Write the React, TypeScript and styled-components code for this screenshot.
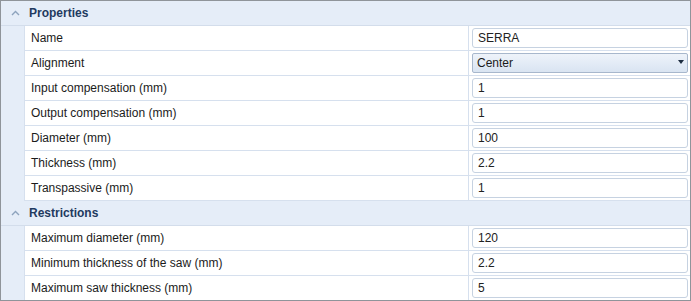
import React from 'react';
import styled, { createGlobalStyle } from 'styled-components';

interface Property {
  label: string;
  value: string;
  kind?: 'text' | 'select';
}

interface Category {
  title: string;
  items: Property[];
}

const categories: Category[] = [
  {
    title: 'Properties',
    items: [
      { label: 'Name', value: 'SERRA' },
      { label: 'Alignment', value: 'Center', kind: 'select' },
      { label: 'Input compensation (mm)', value: '1' },
      { label: 'Output compensation (mm)', value: '1' },
      { label: 'Diameter (mm)', value: '100' },
      { label: 'Thickness (mm)', value: '2.2' },
      { label: 'Transpassive (mm)', value: '1' },
    ],
  },
  {
    title: 'Restrictions',
    items: [
      { label: 'Maximum diameter (mm)', value: '120' },
      { label: 'Minimum thickness of the saw (mm)', value: '2.2' },
      { label: 'Maximum saw thickness (mm)', value: '5' },
    ],
  },
];

const GlobalStyle = createGlobalStyle`
  body {
    margin: 0;
    background: #ffffff;
    font-family: 'Liberation Sans', Arial, sans-serif;
  }
`;

const App: React.FC = () => {
  return (
    <>
      <GlobalStyle />
      <Grid>
        {categories.map((cat) => (
          <Section key={cat.title}>
            <CategoryHeader>
              <Toggle>
                <svg width="9" height="6" viewBox="0 0 9 6">
                  <path d="M1 5 L4.5 1.5 L8 5" fill="none" stroke="#8da3bd" strokeWidth="1.4" />
                </svg>
              </Toggle>
              <CategoryTitle>{cat.title}</CategoryTitle>
            </CategoryHeader>
            {cat.items.map((item) => (
              <Row key={item.label}>
                <Label>{item.label}</Label>
                <ValueCell>
                  {item.kind === 'select' ? (
                    <Select>
                      <span>{item.value}</span>
                      <Arrow />
                    </Select>
                  ) : (
                    <TextBox>{item.value}</TextBox>
                  )}
                </ValueCell>
              </Row>
            ))}
          </Section>
        ))}
      </Grid>
    </>
  );
};

const Grid = styled.div`
  width: 691px;
  height: 301px;
  box-sizing: border-box;
  border: 1px solid #8f949a;
  background: #e5edf8;
  overflow: hidden;
  display: flex;
  flex-direction: column;
`;

const Section = styled.div`
  display: flex;
  flex-direction: column;
`;

const CategoryHeader = styled.div`
  height: 24px;
  border-bottom: 1px solid #d3ddeb;
  display: flex;
  align-items: center;
`;

const Toggle = styled.div`
  width: 27px;
  display: flex;
  justify-content: center;
  padding-left: 1px;
`;

const CategoryTitle = styled.div`
  font-size: 12px;
  font-weight: bold;
  color: #1f3a5f;
`;

const Row = styled.div`
  margin-left: 23px;
  height: 24px;
  border-bottom: 1px solid #d6e0ee;
  border-left: 1px solid #d6e0ee;
  background: #ffffff;
  display: grid;
  grid-template-columns: 444px 1fr;
`;

const Label = styled.div`
  border-right: 1px solid #d6e0ee;
  padding-left: 6px;
  display: flex;
  align-items: center;
  font-size: 12px;
  color: #1b1b1b;
`;

const ValueCell = styled.div`
  padding: 2px 2px 2px 3px;
  display: flex;
`;

const TextBox = styled.div`
  flex: 1;
  box-sizing: border-box;
  height: 20px;
  border: 1px solid #c6d2e1;
  border-radius: 3px;
  padding-left: 5px;
  display: flex;
  align-items: center;
  font-size: 12px;
  color: #222;
  background: #ffffff;
`;

const Select = styled.div`
  flex: 1;
  box-sizing: border-box;
  height: 20px;
  border: 1px solid #a7b7cc;
  border-radius: 2px;
  padding: 0 3px 0 4px;
  display: flex;
  align-items: center;
  justify-content: space-between;
  font-size: 12px;
  color: #1b1b1b;
  background: linear-gradient(#eef3fa, #d9e4f2);
`;

const Arrow = styled.div`
  width: 0;
  height: 0;
  margin-top: -2px;
  border-left: 3.5px solid transparent;
  border-right: 3.5px solid transparent;
  border-top: 4px solid #1c2c40;
`;

export default App;
